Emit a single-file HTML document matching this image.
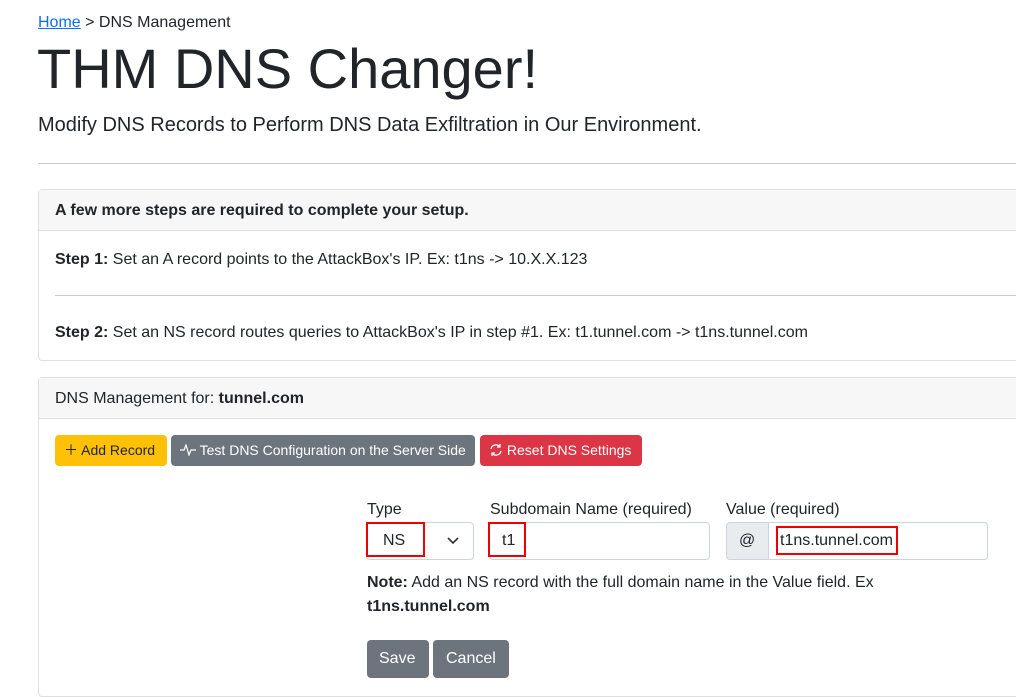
<!DOCTYPE html>
<html><head><style>
*{box-sizing:border-box}
body{margin:0;width:1016px;height:683px;overflow:hidden;background:#fff;font-family:"Liberation Sans",sans-serif;color:#212529;position:relative}
.a{position:absolute;white-space:nowrap}
.card{position:absolute;left:38px;width:990px;border:1px solid #dfdfdf;border-radius:4px}
.hdr{background:#f7f7f7;border-bottom:1px solid #dfdfdf}
.btn{position:absolute;top:435px;height:31px;border-radius:4px;font-size:14px;line-height:31px;color:#fff;padding:0 9px}
.inp{position:absolute;top:522px;height:38px;border:1px solid #ced4da;border-radius:4px;background:#fff}
.red{position:absolute;border:2px solid #e00}
</style></head><body>
<div class="a" style="left:38px;top:14px;font-size:16px"><span style="color:#0d6efd;text-decoration:underline">Home</span> &gt; DNS Management</div>
<div class="a" style="left:37px;top:36px;font-size:56px;font-weight:300;letter-spacing:0">THM DNS Changer!</div>
<div class="a" style="left:38px;top:114px;font-size:20px">Modify DNS Records to Perform DNS Data Exfiltration in Our Environment.</div>
<div style="position:absolute;left:38px;top:163px;width:990px;border-top:1px solid #ccc"></div>

<div class="card" style="top:189px;height:172px">
<div class="hdr" style="height:41px;padding:12px 16px;font-size:16px;font-weight:bold">A few more steps are required to complete your setup.</div>
<div class="a" style="left:16px;top:61px;font-size:16px"><b>Step 1:</b> Set an A record points to the AttackBox's IP. Ex: t1ns -&gt; 10.X.X.123</div>
<div style="position:absolute;left:16px;top:105px;width:980px;border-top:1px solid #ccc"></div>
<div class="a" style="left:16px;top:134px;font-size:16px"><b>Step 2:</b> Set an NS record routes queries to AttackBox's IP in step #1. Ex: t1.tunnel.com -&gt; t1ns.tunnel.com</div>
</div>

<div class="card" style="top:377px;height:320px">
<div class="hdr" style="height:41px;padding:12px 16px;font-size:16px">DNS Management for: <b>tunnel.com</b></div>
</div>
<div class="btn" style="left:55px;width:112px;background:#ffc107;color:#212529">＋ Add Record</div>
<div class="btn" style="left:171px;width:304px;background:#6c757d">
<svg width="16" height="12" viewBox="0 0 16 12" style="vertical-align:-1px"><path d="M0 6H4L6 1L9 11L11 6H16" fill="none" stroke="#fff" stroke-width="1.2"/></svg> Test DNS Configuration on the Server Side</div>
<div class="btn" style="left:480px;width:162px;background:#dc3545">
<svg width="14" height="14" viewBox="0 0 14 14" style="vertical-align:-2px"><path d="M2 6A5 5 0 0 1 11 4M12 8A5 5 0 0 1 3 10" fill="none" stroke="#fff" stroke-width="1.3"/><path d="M11 1V4H8M3 13V10H6" fill="none" stroke="#fff" stroke-width="1.3"/></svg> Reset DNS Settings</div>

<div class="a" style="left:367px;top:501px;font-size:16px">Type</div>
<div class="a" style="left:490px;top:501px;font-size:16px">Subdomain Name (required)</div>
<div class="a" style="left:726px;top:501px;font-size:16px">Value (required)</div>
<div class="inp" style="left:366px;width:108px"></div>
<svg class="a" style="left:447px;top:537px" width="12" height="8" viewBox="0 0 12 8"><path d="M1 1L6 6L11 1" fill="none" stroke="#333" stroke-width="1.6"/></svg>
<div class="inp" style="left:489px;width:221px"></div>
<div class="inp" style="left:726px;width:262px;background:#e9ecef"></div>
<div class="inp" style="left:768px;width:220px;border-radius:0 4px 4px 0"></div>
<div class="a" style="left:739px;top:532px;font-size:16px">@</div>
<div class="red" style="left:366px;top:522px;width:59px;height:35px"></div>
<div class="a" style="left:383px;top:532px;font-size:16px">NS</div>
<div class="red" style="left:488px;top:522px;width:38px;height:35px"></div>
<div class="a" style="left:502px;top:532px;font-size:16px">t1</div>
<div class="red" style="left:776px;top:526px;width:122px;height:29px"></div>
<div class="a" style="left:780px;top:532px;font-size:16px">t1ns.tunnel.com</div>

<div class="a" style="left:367px;top:571px;font-size:16px;line-height:24px"><b>Note:</b> Add an NS record with the full domain name in the Value field. Ex<br><b>t1ns.tunnel.com</b></div>
<div class="btn" style="left:367px;top:640px;height:38px;line-height:38px;width:62px;background:#6c757d;font-size:16px;padding:0 12px">Save</div>
<div class="btn" style="left:433px;top:640px;height:38px;line-height:38px;width:76px;background:#6c757d;font-size:16px;padding:0 13px">Cancel</div>
</body></html>
